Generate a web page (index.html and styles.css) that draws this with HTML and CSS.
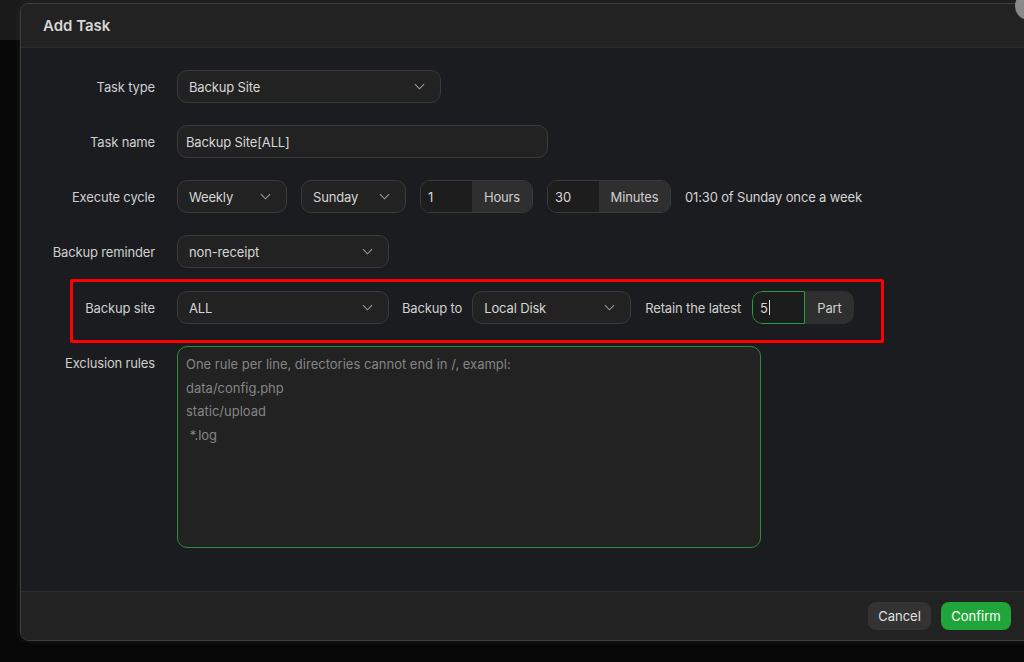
FILE: index.html
```html
<!DOCTYPE html>
<html lang="en">
<head>
<meta charset="utf-8">
<title>Add Task</title>
<link rel="stylesheet" href="styles.css">
</head>
<body>
<div class="dialog">
  <header class="dialog-head">
    <h2 class="dialog-title">Add Task</h2>
  </header>
  <span class="close-dot" aria-hidden="true"></span>

  <form class="dialog-body">
    <div class="row">
      <label class="label">Task type</label>
      <div class="controls">
        <div class="select w-type"><span>Backup Site</span>
          <svg class="chev" viewBox="0 0 12 7"><path d="M1 1l5 5 5-5"/></svg></div>
      </div>
    </div>

    <div class="row">
      <label class="label">Task name</label>
      <div class="controls">
        <div class="input w-name">Backup Site[ALL]</div>
      </div>
    </div>

    <div class="row">
      <label class="label">Execute cycle</label>
      <div class="controls gap14">
        <div class="select w-weekly"><span>Weekly</span>
          <svg class="chev" viewBox="0 0 12 7"><path d="M1 1l5 5 5-5"/></svg></div>
        <div class="select w-sunday"><span>Sunday</span>
          <svg class="chev" viewBox="0 0 12 7"><path d="M1 1l5 5 5-5"/></svg></div>
        <div class="group">
          <span class="num">1</span><span class="addon w-hours">Hours</span>
        </div>
        <div class="group">
          <span class="num">30</span><span class="addon w-minutes">Minutes</span>
        </div>
        <span class="hint">01:30 of Sunday once a week</span>
      </div>
    </div>

    <div class="row">
      <label class="label">Backup reminder</label>
      <div class="controls">
        <div class="select w-remind"><span>non-receipt</span>
          <svg class="chev" viewBox="0 0 12 7"><path d="M1 1l5 5 5-5"/></svg></div>
      </div>
    </div>

    <div class="row marked">
      <label class="label">Backup site</label>
      <div class="controls">
        <div class="select w-site"><span>ALL</span>
          <svg class="chev" viewBox="0 0 12 7"><path d="M1 1l5 5 5-5"/></svg></div>
        <span class="inline-label to-label">Backup to</span>
        <div class="select w-disk"><span>Local Disk</span>
          <svg class="chev" viewBox="0 0 12 7"><path d="M1 1l5 5 5-5"/></svg></div>
        <span class="inline-label retain-label">Retain the latest</span>
        <div class="group plain">
          <span class="num focus">5<i class="caret"></i></span><span class="addon part">Part</span>
        </div>
      </div>
    </div>

    <div class="row top">
      <label class="label label-top">Exclusion rules</label>
      <div class="controls">
        <textarea class="rules" placeholder="One rule per line, directories cannot end in /, exampl:&#10;data/config.php&#10;static/upload&#10; *.log"></textarea>
      </div>
    </div>
  </form>

  <footer class="dialog-foot">
    <button type="button" class="btn btn-cancel">Cancel</button>
    <button type="button" class="btn btn-confirm">Confirm</button>
  </footer>
</div>
</body>
</html>
```

FILE: styles.css
```css
*, *::before, *::after { box-sizing: border-box; }

html, body { height: 100%; }

body {
  margin: 0;
  overflow: hidden;
  font-family: Inter, "Noto Sans", "Liberation Sans", sans-serif;
  font-size: 13px;
  letter-spacing: -0.15px;
  color: #d4d4d4;
  background: linear-gradient(#1a1a1a 0, #1a1a1a 40px, #080808 40px);
}

/* modal window */
.dialog {
  position: relative;
  margin: 3px 0 0 20px;
  width: 1030px;
  height: 638px;
  border: 1px solid #3e3e3e;
  border-radius: 9px;
  background: #1b1c1f;
  display: flex;
  flex-direction: column;
  box-shadow: 0 0 6px rgba(90, 90, 90, 0.25);
}

.dialog-head {
  height: 44px;
  flex: none;
  background: #222222;
  border-bottom: 1px solid #2c2c2c;
  border-radius: 8px 8px 0 0;
  display: flex;
  align-items: center;
  padding-left: 22px;
}

.dialog-title {
  margin: 0;
  font-size: 15px;
  font-weight: 600;
  letter-spacing: 0;
  color: #d6d6d6;
}

/* round close button peeking out of the corner */
.close-dot {
  position: absolute;
  left: 994px;
  top: -12px;
  width: 28px;
  height: 28px;
  border-radius: 50%;
  background: #8a8a8a;
}

.dialog-body {
  flex: 1;
  margin: 0;
  padding: 22px 0 0 19px;
  display: flex;
  flex-direction: column;
  gap: 22px;
}

.row {
  display: grid;
  grid-template-columns: 115px 1fr;
  column-gap: 22px;
  align-items: center;
  min-height: 33px;
}

.row.top { align-items: start; }

.row.marked { position: relative; margin-top: 1px; }

/* red highlight frame around the backup row */
.row.marked::after {
  content: "";
  position: absolute;
  left: 30px;
  top: -12px;
  width: 814px;
  height: 64px;
  border: 3px solid #ff0000;
  border-radius: 2px;
  pointer-events: none;
}

.label {
  text-align: right;
  color: #cfcfcf;
  white-space: nowrap;
}

.label-top { padding-top: 9px; }

.controls {
  display: flex;
  align-items: center;
}

.gap14 { gap: 14px; }

.select,
.input {
  height: 33px;
  border: 1px solid #3a3a3a;
  border-radius: 10px;
  background: #222222;
  display: flex;
  align-items: center;
  padding: 0 12px 0 11px;
  color: #d6d6d6;
  white-space: nowrap;
}

.select { justify-content: space-between; }

.input { padding-left: 8px; }

.chev {
  width: 11px;
  height: 7px;
  fill: none;
  stroke: #9a9a9a;
  stroke-width: 1.2;
  margin-right: 3px;
}

.w-type { width: 264px; }
.w-name { width: 371px; }
.w-weekly { width: 110px; }
.w-sunday { width: 105px; }
.w-remind { width: 212px; }
.w-site { width: 212px; }
.w-disk { width: 159px; }

.group {
  height: 33px;
  display: flex;
  border: 1px solid #3a3a3a;
  border-radius: 10px;
  overflow: hidden;
}

.group .num {
  width: 51px;
  background: #1d1d1d;
  display: flex;
  align-items: center;
  padding-left: 7px;
  color: #d6d6d6;
}

.group .addon {
  background: #2f2f2f;
  display: flex;
  align-items: center;
  justify-content: center;
  color: #cfcfcf;
}

.w-hours { width: 60px; }
.w-minutes { width: 71px; }

.group.plain { border: none; }

.group .num.focus {
  width: 53px;
  border: 1px solid #22a03a;
  border-radius: 10px 0 0 10px;
  background: #1c1c1c;
}

.caret {
  display: inline-block;
  width: 1px;
  height: 15px;
  background: #e0e0e0;
  margin-left: 1px;
}

.group .addon.part { width: 49px; }

.hint { color: #d4d4d4; white-space: nowrap; }

.inline-label { color: #cfcfcf; white-space: nowrap; }
.to-label { margin: 0 10px 0 13px; }
.retain-label { margin: 0 11px 0 14px; }

.rules {
  width: 584px;
  height: 202px;
  resize: none;
  border: 1px solid #2b8c3c;
  border-radius: 10px;
  background: #222222;
  padding: 6px 8px;
  font: inherit;
  font-size: 13px;
  line-height: 23.5px;
  color: #d4d4d4;
  outline: none;
}

.rules::placeholder { color: #858585; }

.dialog-foot {
  height: 49px;
  flex: none;
  background: #222222;
  border-top: 1px solid #2c2c2c;
  border-radius: 0 0 8px 8px;
  display: flex;
  align-items: center;
  justify-content: flex-end;
  gap: 10px;
  padding-right: 38px;
}

.btn {
  height: 28px;
  border: none;
  border-radius: 8px;
  font: inherit;
  font-size: 13px;
  padding: 0;
  cursor: pointer;
}

.btn-cancel { width: 63px; background: #333333; color: #e0e0e0; }
.btn-confirm { width: 70px; background: #20a53a; color: #ffffff; }
```
